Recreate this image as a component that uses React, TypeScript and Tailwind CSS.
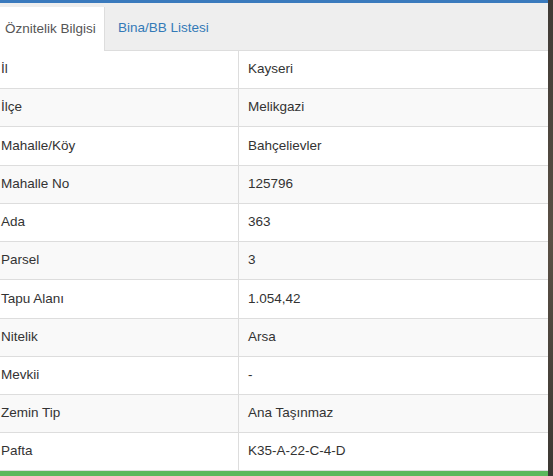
import React from 'react';

type Row = { label: string; value: string; tall?: boolean };

const rows: Row[] = [
  { label: 'İl', value: 'Kayseri' },
  { label: 'İlçe', value: 'Melikgazi' },
  { label: 'Mahalle/Köy', value: 'Bahçelievler', tall: true },
  { label: 'Mahalle No', value: '125796' },
  { label: 'Ada', value: '363' },
  { label: 'Parsel', value: '3' },
  { label: 'Tapu Alanı', value: '1.054,42', tall: true },
  { label: 'Nitelik', value: 'Arsa' },
  { label: 'Mevkii', value: '-' },
  { label: 'Zemin Tip', value: 'Ana Taşınmaz' },
  { label: 'Pafta', value: 'K35-A-22-C-4-D' },
];

const App: React.FC = () => {
  return (
    <div className="w-[553px] h-[476px] flex overflow-hidden bg-[#4d463e] text-[13.5px] text-[#333] font-['Liberation_Sans',Arial,sans-serif]">
      <div className="w-[548px] flex flex-col bg-white">
        <div className="h-[3px] bg-[#3a7abd]" />

        {/* sekmeler */}
        <div className="h-[48px] flex items-end bg-[#eee] border-b border-[#ddd] whitespace-nowrap">
          <div className="h-[44px] -mb-px flex items-center pl-[5px] w-[105px] shrink-0 bg-white border-r border-[#ddd] text-[#555]">
            Öznitelik Bilgisi
          </div>
          <div className="h-[44px] flex items-center pl-[13px] text-[#337ab7]">Bina/BB Listesi</div>
        </div>

        {/* tablo */}
        <div className="flex flex-col">
          {rows.map((r, i) => (
            <div
              key={r.label}
              className={`flex border-b border-[#ddd] ${r.tall ? 'h-[39px]' : 'h-[38px]'} ${i % 2 === 1 ? 'bg-[#f9f9f9]' : 'bg-white'}`}
            >
              <div className="w-[239px] flex items-center pl-[1px] border-r border-[#ddd]">{r.label}</div>
              <div className="flex-1 flex items-center pl-[9px]">{r.value}</div>
            </div>
          ))}
        </div>

        <div className="flex-1 bg-[#5cb85c]" />
      </div>
      <div className="flex-1 bg-gradient-to-b from-[#3f3a35] via-[#5a5045] to-[#3c3833]" />
    </div>
  );
};

export default App;
